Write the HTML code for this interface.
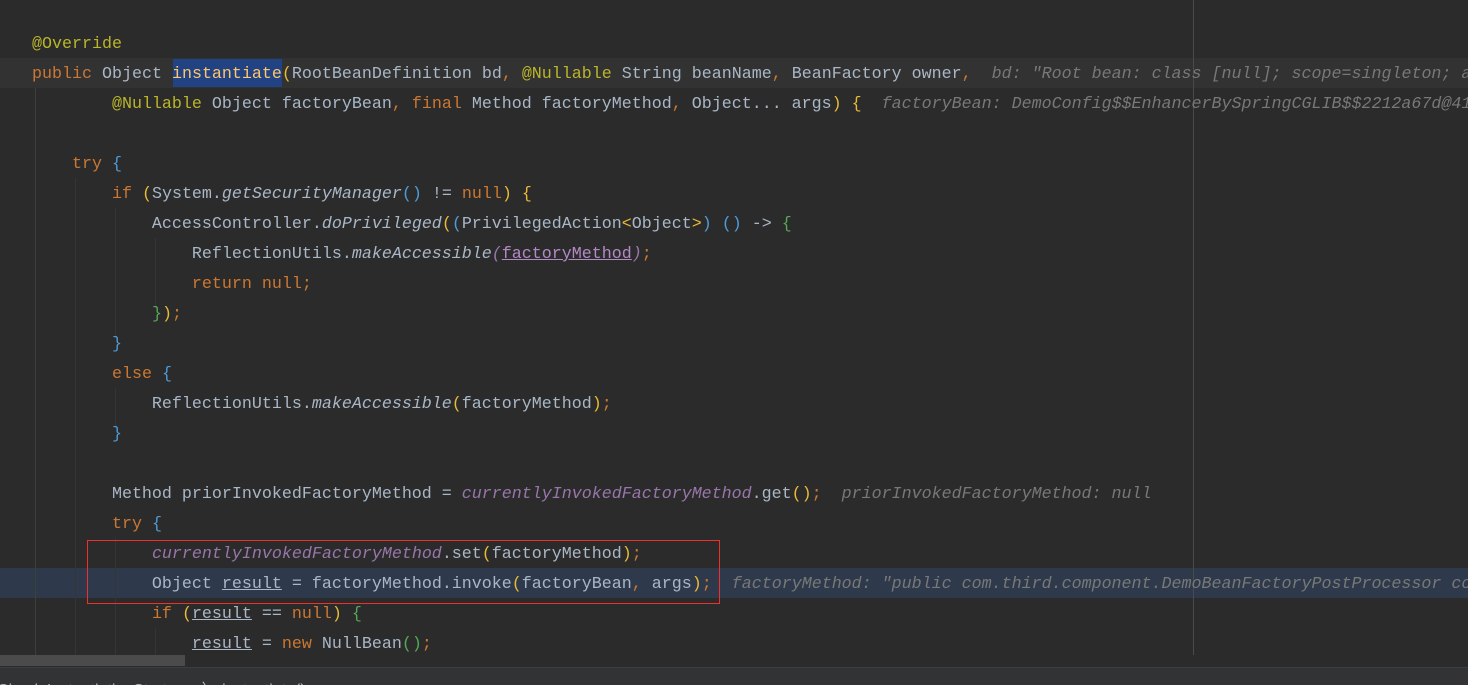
<!DOCTYPE html>
<html style="overflow:hidden;height:685px"><head><style>
body{margin:0;width:1468px;height:685px;background:#2b2b2b;overflow:hidden;position:relative;font-family:"Liberation Mono",monospace;}
.l{position:absolute;left:2px;height:30px;line-height:34px;font-size:16.67px;white-space:pre;color:#a9b7c6;}
.k{color:#cc7832}.a{color:#bbb529}.m{color:#ffc66d}.s{color:#9876aa;font-style:italic}.i{font-style:italic}
.h{color:#787878;font-style:italic}.y{color:#e8ba36}.b{color:#4e9bd6}.g{color:#54a857}.u{text-decoration:underline}
.hl{position:absolute;left:0;width:1468px;height:30px}
.gd{position:absolute;width:1px;background:#353535}
</style></head><body>
<div class="hl" style="top:58px;background:#323232"></div>
<div class="hl" style="top:568px;background:#2e3a4b"></div>
<div style="position:absolute;left:1193px;top:0;width:1px;height:667px;background:#4a4a4a"></div>
<div class="gd" style="left:35px;top:88px;height:580px;background:#394236"></div>
<div class="gd" style="left:75px;top:178px;height:490px"></div>
<div class="gd" style="left:115px;top:208px;height:130px"></div>
<div class="gd" style="left:155px;top:238px;height:70px"></div>
<div class="gd" style="left:115px;top:388px;height:40px"></div>
<div class="gd" style="left:115px;top:538px;height:130px"></div>
<div class="gd" style="left:155px;top:628px;height:40px"></div>
<div style="position:absolute;left:173px;top:59px;width:109px;height:28px;background:#214283"></div>
<div class="l" style="top:28px"><span class="a">   @Override</span></div>
<div class="l" style="top:58px">   <span class="k">public</span> Object <span class="m">instantiate</span><span class="y">(</span>RootBeanDefinition bd<span class="k">,</span> <span class="a">@Nullable</span> String beanName<span class="k">,</span> BeanFactory owner<span class="k">,</span>  <span class="h">bd: "Root bean: class [null]; scope=singleton; a</span></div>
<div class="l" style="top:88px">           <span class="a">@Nullable</span> Object factoryBean<span class="k">,</span> <span class="k">final</span> Method factoryMethod<span class="k">,</span> Object... args<span class="y">)</span> <span class="y">{</span>  <span class="h">factoryBean: DemoConfig$$EnhancerBySpringCGLIB$$2212a67d@41</span></div>
<div class="l" style="top:148px">       <span class="k">try</span> <span class="b">{</span></div>
<div class="l" style="top:178px">           <span class="k">if</span> <span class="y">(</span>System.<span class="i">getSecurityManager</span><span class="b">()</span> != <span class="k">null</span><span class="y">)</span> <span class="y">{</span></div>
<div class="l" style="top:208px">               AccessController.<span class="i">doPrivileged</span><span class="y">(</span><span class="b">(</span>PrivilegedAction<span class="y">&lt;</span>Object<span class="y">&gt;</span><span class="b">)</span> <span class="b">()</span> -&gt; <span class="g">{</span></div>
<div class="l" style="top:238px">                   ReflectionUtils.<span class="i">makeAccessible</span><span class="s">(</span><span class="u" style="color:#b389c5">factoryMethod</span><span class="s">)</span><span class="k">;</span></div>
<div class="l" style="top:268px">                   <span class="k">return null;</span></div>
<div class="l" style="top:298px">               <span class="g">}</span><span class="y">)</span><span class="k">;</span></div>
<div class="l" style="top:328px">           <span class="b">}</span></div>
<div class="l" style="top:358px">           <span class="k">else</span> <span class="b">{</span></div>
<div class="l" style="top:388px">               ReflectionUtils.<span class="i">makeAccessible</span><span class="y">(</span>factoryMethod<span class="y">)</span><span class="k">;</span></div>
<div class="l" style="top:418px">           <span class="b">}</span></div>
<div class="l" style="top:478px">           Method priorInvokedFactoryMethod = <span class="s">currentlyInvokedFactoryMethod</span>.get<span class="y">()</span><span class="k">;</span>  <span class="h">priorInvokedFactoryMethod: null</span></div>
<div class="l" style="top:508px">           <span class="k">try</span> <span class="b">{</span></div>
<div class="l" style="top:538px">               <span class="s">currentlyInvokedFactoryMethod</span>.set<span class="y">(</span>factoryMethod<span class="y">)</span><span class="k">;</span></div>
<div class="l" style="top:568px">               Object <span class="u">result</span> = factoryMethod.invoke<span class="y">(</span>factoryBean<span class="k">,</span> args<span class="y">)</span><span class="k">;</span>  <span class="h">factoryMethod: "public com.third.component.DemoBeanFactoryPostProcessor co</span></div>
<div class="l" style="top:598px">               <span class="k">if</span> <span class="y">(</span><span class="u">result</span> == <span class="k">null</span><span class="y">)</span> <span class="g">{</span></div>
<div class="l" style="top:628px">                   <span class="u">result</span> = <span class="k">new</span> NullBean<span class="g">()</span><span class="k">;</span></div>
<div style="position:absolute;left:87px;top:540px;width:631px;height:62px;border:1px solid #f0302c"></div>
<div style="position:absolute;left:0;top:655px;width:1468px;height:12px;background:#2b2b2b"></div>
<div style="position:absolute;left:0;top:655px;width:185px;height:11px;background:#4b4b4b"></div>
<div style="position:absolute;left:0;top:667px;width:1468px;height:18px;background:#313335;border-top:1px solid #3c3f41;overflow:hidden">
<div style="position:absolute;left:-2px;top:8px;font-family:'Liberation Sans',sans-serif;font-size:16px;color:#a9b7c6;white-space:pre">SimpleInstantiationStrategy  〉 instantiate()</div></div>
</body></html>
